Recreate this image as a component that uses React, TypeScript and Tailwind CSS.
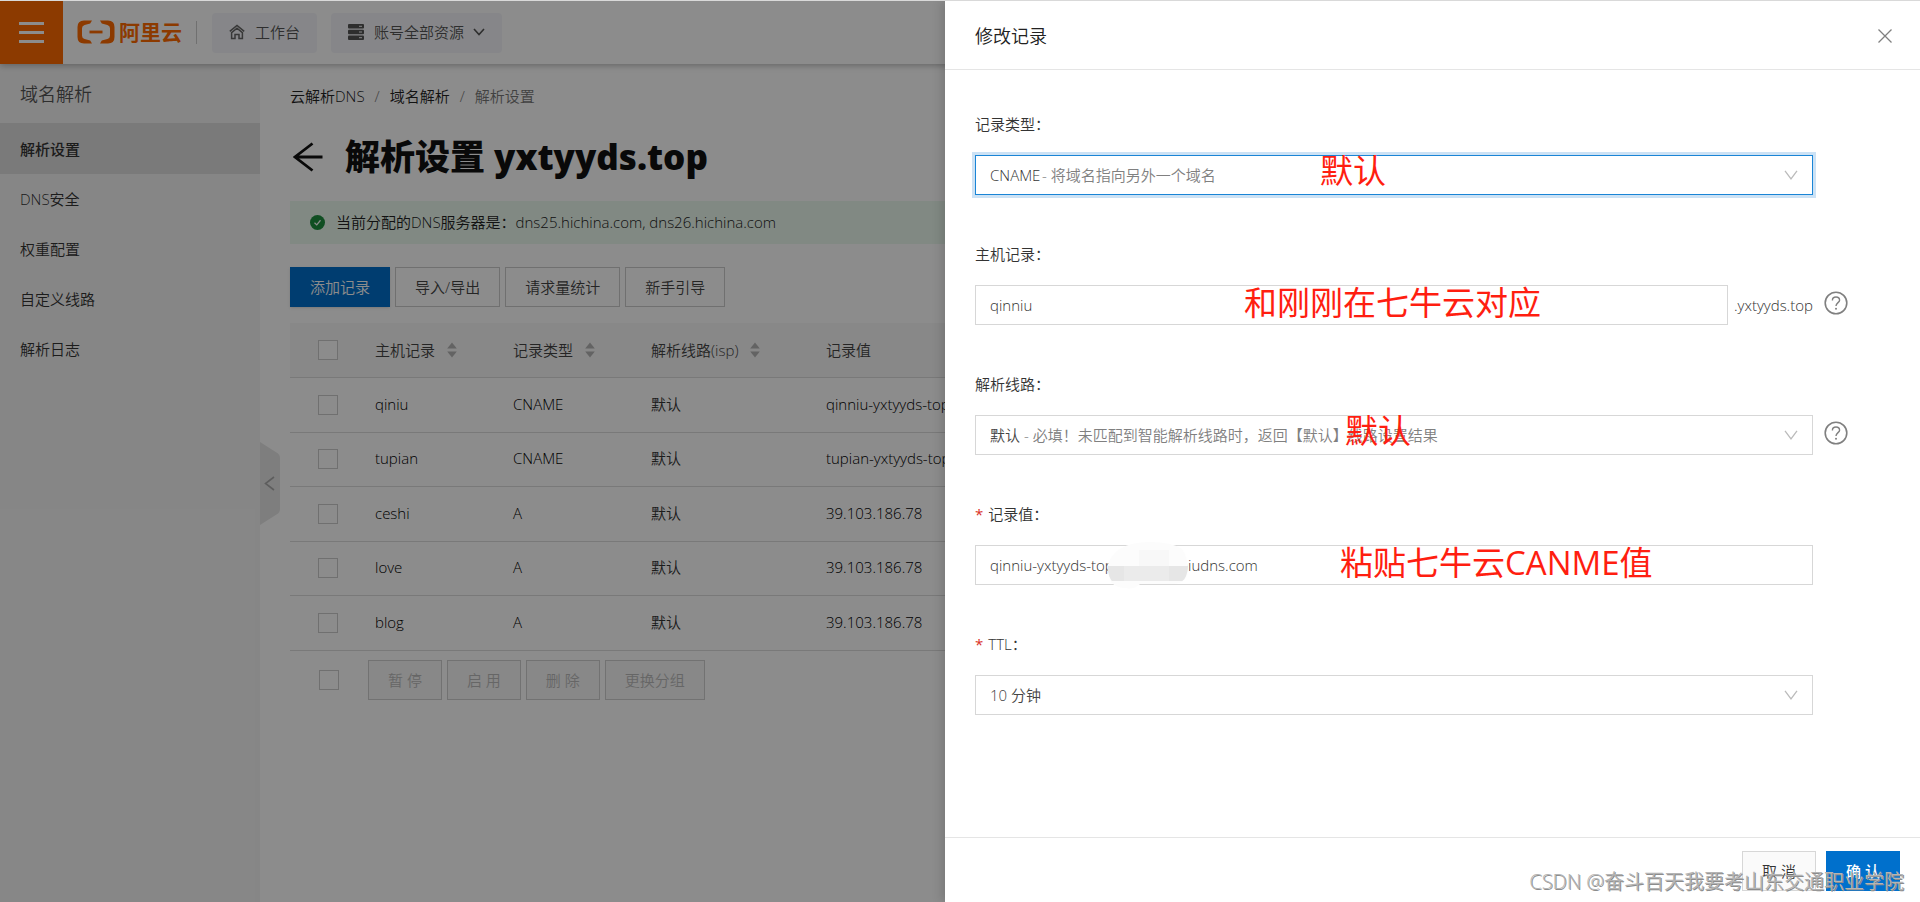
import type { ReactNode } from "react";

const menuItems = ["DNS安全", "权重配置", "自定义线路", "解析日志"];

const records = [
  { host: "qiniu", type: "CNAME", line: "默认", value: "qinniu-yxtyyds-top.qiniudns.com" },
  { host: "tupian", type: "CNAME", line: "默认", value: "tupian-yxtyyds-top.qiniudns.com" },
  { host: "ceshi", type: "A", line: "默认", value: "39.103.186.78" },
  { host: "love", type: "A", line: "默认", value: "39.103.186.78" },
  { host: "blog", type: "A", line: "默认", value: "39.103.186.78" },
];

const batchActions = ["暂 停", "启 用", "删 除", "更换分组"];

function Checkbox({ label }: { label: string }) {
  return (
    <input
      type="checkbox"
      aria-label={label}
      className="block size-5 appearance-none border border-[#cccccc] bg-white"
    />
  );
}

function SortIcon() {
  return (
    <svg viewBox="0 0 10 16" className="h-4 w-[10px]" fill="#b4b4b4" aria-hidden="true">
      <path d="M5 0.5 9.8 6.5H0.2Z" />
      <path d="M5 15.5 0.2 9.5H9.8Z" />
    </svg>
  );
}

function LogoMark() {
  return (
    <svg viewBox="0 0 38 24" className="h-6 w-[38px]" fill="#ff6a00" aria-hidden="true">
      <path d="M15 0.5H7Q0.5 0.5 0.5 7V17Q0.5 23.5 7 23.5H15L13.2 20.4L7.6 19Q5 18.3 5 15.8V8.2Q5 5.7 7.6 5L13.2 3.6Z" />
      <path d="M23 0.5H31Q37.5 0.5 37.5 7V17Q37.5 23.5 31 23.5H23L24.8 20.4L30.4 19Q33 18.3 33 15.8V8.2Q33 5.7 30.4 5L24.8 3.6Z" />
      <rect x="12.5" y="10.6" width="13" height="2.8" />
    </svg>
  );
}

function Header() {
  return (
    <header className="relative z-10 flex h-[63px] items-center bg-white shadow-[0_2px_6px_rgba(0,0,0,0.25)]">
      <button
        type="button"
        aria-label="菜单"
        className="flex h-full w-[63px] flex-col items-center justify-center gap-[6px] bg-[#ff6a00]"
      >
        <span className="h-[3px] w-[25px] bg-white" />
        <span className="h-[3px] w-[25px] bg-white" />
        <span className="h-[3px] w-[25px] bg-white" />
      </button>
      <a href="#home" className="ml-[14px] flex items-center gap-1 pb-0.5">
        <LogoMark />
        <span className="text-[21px] leading-6 font-bold text-[#ff6a00]">阿里云</span>
      </a>
      <span className="ml-[14px] h-[23px] w-px bg-[#cccccc]" />
      <button type="button" className="ml-[15px] flex h-10 items-center gap-[10px] rounded-sm bg-[#f4f5f9] px-[17px] pb-0.5 text-[#555555]">
        <svg viewBox="0 0 16 16" className="size-4" fill="none" stroke="#666666" strokeWidth="1.5" aria-hidden="true">
          <path d="M0.8 7.4 8 1.4 15.2 7.4" />
          <path d="M2.6 8.6V14.4H6V10.4H10V14.4H13.4V8.6L8 4.2Z" />
        </svg>
        工作台
      </button>
      <button type="button" className="ml-[14px] flex h-10 items-center rounded-sm bg-[#f4f5f9] px-[17px] pb-0.5 text-[#555555]">
        <svg viewBox="0 0 16 16" className="mr-[10px] size-4" aria-hidden="true">
          <rect y="0" width="16" height="4.6" rx="1" fill="#555555" />
          <rect y="5.7" width="16" height="4.6" rx="1" fill="#555555" />
          <rect y="11.4" width="16" height="4.6" rx="1" fill="#555555" />
          <path d="M11 2.3h3M11 8h3M11 13.7h3" stroke="#f4f5f9" strokeWidth="1" />
        </svg>
        账号全部资源
        <svg viewBox="0 0 12 8" className="ml-[9px] h-2 w-3" fill="none" stroke="#555555" strokeWidth="1.6" aria-hidden="true">
          <path d="M1 1 6 6.6 11 1" />
        </svg>
      </button>
    </header>
  );
}

function Sidebar() {
  return (
    <aside className="relative w-[260px] shrink-0 bg-[#f5f5f5]">
      <h2 className="flex h-[59px] items-center px-5 text-lg text-[#555555]">域名解析</h2>
      <nav className="flex flex-col text-[#333333]">
        <a href="#settings" className="flex h-[51px] items-center bg-[#dedede] px-5 font-medium">
          解析设置
        </a>
        {menuItems.map((item) => (
          <a key={item} href="#menu" className="flex h-[50px] items-center px-5">
            {item}
          </a>
        ))}
      </nav>
      <button type="button" aria-label="收起" className="absolute top-[378px] left-full">
        <svg viewBox="0 0 20 83" className="h-[83px] w-5" aria-hidden="true">
          <path d="M0 0 16.5 10.5Q20 12.5 20 16V67Q20 70.5 16.5 72.5L0 83Z" fill="#e6e6e6" />
          <path d="M14 35 5.5 41.5 14 48" fill="none" stroke="#aaaaaa" strokeWidth="1.6" />
        </svg>
      </button>
    </aside>
  );
}

function OutlineButton({ children }: { children: ReactNode }) {
  return (
    <button type="button" className="h-10 border border-[#cccccc] px-[19px] text-[#444444]">
      {children}
    </button>
  );
}

function RecordTable() {
  return (
    <table className="mt-4 w-full table-fixed border-collapse text-left">
      <colgroup>
        <col className="w-[69px]" />
        <col className="w-[138px]" />
        <col className="w-[138px]" />
        <col className="w-[175px]" />
        <col />
      </colgroup>
      <thead>
        <tr className="h-[54px] border-b border-[#dcdcdc] bg-[#f8f8f8] text-[#444444]">
          <th className="pl-7">
            <Checkbox label="全选" />
          </th>
          {["主机记录", "记录类型", "解析线路(isp)"].map((name) => (
            <th key={name} className="pl-4 font-[350]">
              <span className="flex items-center gap-3 whitespace-nowrap">
                {name}
                <SortIcon />
              </span>
            </th>
          ))}
          <th className="pl-4 font-[350]">记录值</th>
        </tr>
      </thead>
      <tbody className="text-black">
        {records.map((record) => (
          <tr key={record.host} className="border-b border-[#dcdcdc] odd:h-[55px] even:h-[54px]">
            <td className="pl-7">
              <Checkbox label={record.host} />
            </td>
            <td className="pb-0.5 pl-4">{record.host}</td>
            <td className="pb-0.5 pl-4">{record.type}</td>
            <td className="pb-0.5 pl-4 text-[#333333]">{record.line}</td>
            <td className="pb-0.5 pl-4 whitespace-nowrap">{record.value}</td>
          </tr>
        ))}
      </tbody>
    </table>
  );
}

function MainContent() {
  return (
    <main className="min-w-0 flex-1 overflow-hidden bg-white pl-[30px]">
      <nav aria-label="面包屑" className="mt-5 flex h-6 items-center gap-[10px] text-[#222222]">
        <a href="#dns">云解析DNS</a>
        <span className="text-[#777777]">/</span>
        <a href="#domains">域名解析</a>
        <span className="text-[#777777]">/</span>
        <span className="text-[#777777]">解析设置</span>
      </nav>
      <div className="mt-6 flex h-[50px] items-center">
        <button type="button" aria-label="返回" className="mr-[22px] ml-[3px]">
          <svg viewBox="0 0 30 30" className="size-[30px]" fill="none" stroke="#111111" strokeWidth="2.8" aria-hidden="true">
            <path d="M19.500 1.500 2 15 19.500 28.500M2 15H29.500" />
          </svg>
        </button>
        <h1 className="text-[35px] leading-[50px] font-extrabold text-[#111111]">解析设置 yxtyyds.top</h1>
      </div>
      <div className="mt-[19px] flex h-[43px] items-center gap-[11px] bg-[#ebfaef] pl-5 text-[#222222]">
        <svg viewBox="0 0 16 16" className="size-[15px]" aria-hidden="true">
          <circle cx="8" cy="8" r="8" fill="#1e8e3e" />
          <path d="M4.800 8.200 7.200 10.500 11.200 5.600" fill="none" stroke="#ffffff" strokeWidth="1.300" />
        </svg>
        <p className="pb-0.5">当前分配的DNS服务器是：dns25.hichina.com, dns26.hichina.com</p>
      </div>
      <div className="mt-[23px] flex gap-[5px]">
        <button type="button" className="h-10 bg-[#0070cc] px-5 text-white shadow-sm">
          添加记录
        </button>
        <OutlineButton>导入/导出</OutlineButton>
        <OutlineButton>请求量统计</OutlineButton>
        <OutlineButton>新手引导</OutlineButton>
      </div>
      <RecordTable />
      <div className="mt-[9px] flex items-center gap-[5px] pl-[29px]">
        <Checkbox label="选择全部记录" />
        <div className="ml-6 flex gap-[5px]">
          {batchActions.map((action) => (
            <button
              key={action}
              type="button"
              disabled
              className="h-10 border border-[#cfcfcf] bg-[#f7f7f7] px-[19px] text-[#bbbbbb]"
            >
              {action}
            </button>
          ))}
        </div>
      </div>
    </main>
  );
}

function HelpIcon() {
  return (
    <svg viewBox="0 0 24 24" className="mb-1 size-6" fill="none" stroke="#808080" aria-hidden="true">
      <circle cx="12" cy="12" r="10.8" strokeWidth="1.600" />
      <path d="M8.400 9.400C8.400 7.200 9.900 6 12 6S15.600 7.200 15.600 9.200C15.600 11.600 12 11.800 12 15" strokeWidth="1.400" />
      <circle cx="12" cy="17.700" r="1" fill="#808080" stroke="none" />
    </svg>
  );
}

function Field({
  id,
  label,
  required,
  help,
  children,
}: {
  id: string;
  label: string;
  required?: boolean;
  help?: boolean;
  children: ReactNode;
}) {
  return (
    <div className="h-[130px]">
      <label htmlFor={id} className="flex h-5 items-center gap-[5px] text-[#333333]">
        {required && <span className="font-normal text-[#d93026]">*</span>}
        {label}
      </label>
      <div className="mt-[21px] flex items-center gap-[11px]">
        <div className="relative flex min-w-0 flex-1 items-center">{children}</div>
        <div className="w-24">{help && <HelpIcon />}</div>
      </div>
    </div>
  );
}

function Select({ id, value, active }: { id: string; value: string; active?: boolean }) {
  return (
    <>
      <select
        id={id}
        className={
          active
            ? "h-10 w-full appearance-none border border-[#1a85d6] bg-white px-[14px] text-[#333333] shadow-[0_0_0_3px_rgba(0,112,204,0.2)] outline-none"
            : "h-10 w-full appearance-none border border-[#d7d7d7] bg-white px-[14px] text-[#444444] outline-none"
        }
      >
        <option>{value}</option>
      </select>
      <svg
        viewBox="0 0 14 10"
        className="pointer-events-none absolute right-[15px] h-[10px] w-[14px]"
        fill="none"
        stroke="#bbbbbb"
        strokeWidth="1.300"
        aria-hidden="true"
      >
        <path d="M1 0.800 7 8.800 13 0.800" />
      </svg>
    </>
  );
}

function RecordDrawer() {
  return (
    <section
      role="dialog"
      aria-label="修改记录"
      className="relative flex w-[975px] flex-col bg-white shadow-[-3px_0_10px_rgba(0,0,0,0.15)]"
    >
      <header className="flex h-[69px] shrink-0 items-center justify-between border-b border-[#e5e5e5] pt-0.5 pr-7 pl-[30px]">
        <h2 className="text-lg text-[#222222]">修改记录</h2>
        <button type="button" aria-label="关闭">
          <svg viewBox="0 0 14 14" className="size-[14px]" stroke="#808080" strokeWidth="1.300" aria-hidden="true">
            <path d="M0.500 0.500 13.500 13.500M13.500 0.500 0.500 13.500" />
          </svg>
        </button>
      </header>

      <form className="flex-1 pt-11 pl-[30px]">
        <Field id="record-type" label="记录类型：">
          <Select id="record-type" value="CNAME" active />
          <span className="pointer-events-none absolute left-[67px] text-[#808080]">- 将域名指向另外一个域名</span>
          <span className="pointer-events-none absolute bottom-0 left-[345px] text-[33px] leading-[48px] font-normal text-[#ff1e10]">
            默认
          </span>
        </Field>

        <Field id="host" label="主机记录：" help>
          <input
            id="host"
            type="text"
            defaultValue="qinniu"
            className="h-10 min-w-0 flex-1 border border-[#d7d7d7] px-[14px] text-[#333333] outline-none"
          />
          <span className="w-[85px] pl-[6px] text-[#333333]">.yxtyyds.top</span>
          <span className="pointer-events-none absolute bottom-0 left-[269px] text-[33px] leading-[44px] font-normal text-[#ff1e10]">
            和刚刚在七牛云对应
          </span>
        </Field>

        <Field id="line" label="解析线路：" help>
          <Select id="line" value="默认" />
          <span className="pointer-events-none absolute left-[49px] text-[#808080]">
            - 必填！未匹配到智能解析线路时，返回【默认】线路设置结果
          </span>
          <span className="pointer-events-none absolute bottom-0 left-[370px] text-[33px] leading-[48px] font-normal text-[#ff1e10]">
            默认
          </span>
        </Field>

        <Field id="value" label="记录值：" required>
          <input
            id="value"
            type="text"
            defaultValue="qinniu-yxtyyds-top-xxxxxx.qiniudns.com"
            className="h-10 w-full border border-[#d7d7d7] px-[14px] text-[#333333] outline-none"
          />
          <svg viewBox="0 0 84 50" className="absolute left-[131px] h-[50px] w-[84px]" aria-hidden="true">
            <path d="M14 9Q24 2 44 2Q66 2 76 9Q82 18 82 30Q81 44 66 44H34Q28 50 20 48Q10 48 5 42Q1 34 2 24Q6 14 14 9Z" fill="#fcfcfc" />
            <path d="M33 10H63V26H33Z" fill="#f8f8f8" />
            <path d="M2 26H82Q81 38 76 41H6Q2 36 2 26Z" fill="#ebebeb" />
            <path d="M2 26H18V41H6Q2 36 2 26ZM63 26H82Q81 38 76 41H63Z" fill="#e6e6e6" />
          </svg>
          <span className="pointer-events-none absolute bottom-0 left-[365px] text-[33px] leading-[44px] font-normal text-[#ff1e10]">
            粘贴七牛云CANME值
          </span>
        </Field>

        <Field id="ttl" label="TTL：" required>
          <Select id="ttl" value="10 分钟" />
        </Field>
      </form>

      <footer className="flex h-[65px] shrink-0 items-start justify-end gap-[10px] border-t border-[#e5e5e5] px-5 pt-[13px]">
        <button type="button" className="h-10 w-[74px] border border-[#d7d7d7] bg-[#fafafa] text-[#333333]">
          取 消
        </button>
        <button type="submit" className="h-10 w-[74px] bg-[#0070cc] font-medium text-white">
          确 认
        </button>
      </footer>

      <p className="pointer-events-none absolute right-4 bottom-[6px] text-xl leading-7 whitespace-nowrap text-[#b4b4b4] [text-shadow:1px_1px_0_#8c8c8c]">
        CSDN @奋斗百天我要考山东交通职业学院
      </p>
    </section>
  );
}

export default function App() {
  return (
    <div className="relative flex min-h-screen flex-col overflow-hidden border-t border-[#d9d9d9] bg-white font-['Open_Sans','Noto_Sans_CJK_SC',sans-serif] text-[15px] leading-6 font-[350]">
      <Header />
      <div className="flex flex-1">
        <Sidebar />
        <MainContent />
      </div>
      <div className="absolute inset-0 z-20 flex justify-end bg-black/45">
        <RecordDrawer />
      </div>
    </div>
  );
}
